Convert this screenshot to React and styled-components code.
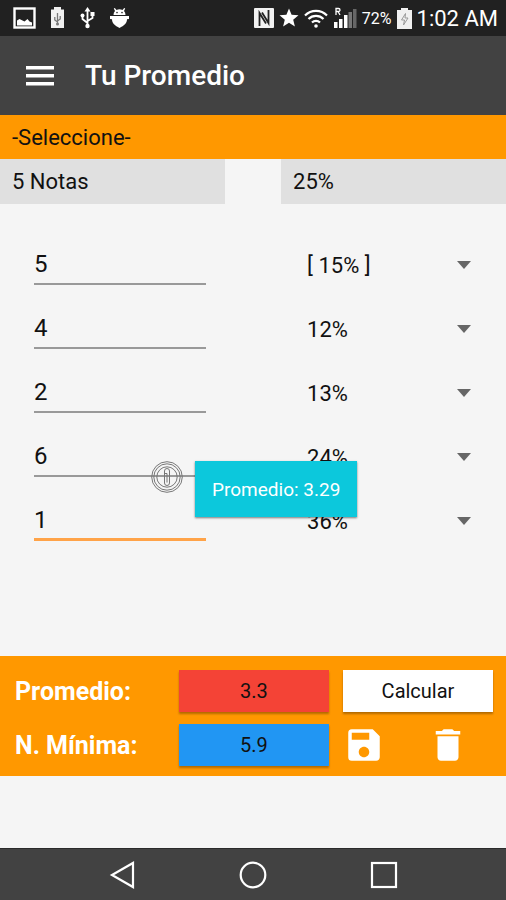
import React, { useState } from "react";
import styled, { createGlobalStyle } from "styled-components";

const initialNotes = [
	{ note: "5", percent: "[ 15% ]" },
	{ note: "4", percent: "12%" },
	{ note: "2", percent: "13%" },
	{ note: "6", percent: "24%" },
	{ note: "1", percent: "36%" },
];

const StatusBar = () => (
	<Status>
		<StatusGroup $gap={14}>
			<svg width="23" height="22" viewBox="0 0 23 22" fill="none">
				<rect x="1.5" y="1.5" width="20" height="19" stroke="#fff" strokeWidth="2.4" />
				<path d="M4 18.500v-5l2.500-1.500 3 1.500 2 1 3-2.500 2 2.500 2.500 1v3z" fill="#fff" />
			</svg>
			<svg width="15" height="22" viewBox="0 0 15 22">
				<path d="M4 0h7v2.500h3V21H1V2.500h3z" fill="#f0f0f0" />
				<path d="M7.500 6v12M4.800 10v3l2.700 2M10.200 9v3l-2.700 2" stroke="#777" strokeWidth="1.300" fill="none" />
				<circle cx="7.500" cy="17" r="1.500" fill="#777" />
			</svg>
			<Glyph width="17" height="22" viewBox="0 0 17 22" fill="none" stroke="#fff" strokeWidth="1.800">
				<path d="M8.500 3v16M3.500 9v3l5 4M13.500 7v4l-5 3" />
				<path d="M8.500 0l3 4.500h-6z" fill="#fff" stroke="none" />
				<circle cx="8.500" cy="19" r="2.200" fill="#fff" stroke="none" />
				<circle cx="3.500" cy="8.500" r="2" fill="#fff" stroke="none" />
				<rect x="11.500" y="5" width="4" height="4" fill="#fff" stroke="none" />
			</Glyph>
			<Glyph width="19" height="22" viewBox="0 0 19 22" fill="#fff">
				<path d="M3.500 8a6 6 0 0 1 1.500-4L3.800 1.400l1-.5 1.700 2a7 7 0 0 1 6 0l1.700-2 1 .5L14 4a6 6 0 0 1 1.500 4z" />
				<path d="M0 9h19v3l-2 .3c0 4-3 6.500-7.500 8.700C5 18.800 2 16.300 2 12.300L0 12z" />
				<circle cx="7" cy="5.600" r=".8" fill="#222" />
				<circle cx="12" cy="5.600" r=".8" fill="#222" />
			</Glyph>
		</StatusGroup>
		<StatusGroup $gap={5}>
			<svg width="20" height="20" viewBox="0 0 20 20">
				<rect width="20" height="20" rx="1" fill="#f2f2f2" />
				<path d="M5.500 18V5l6.500 10.500M14.500 2v13L8 4.500" fill="none" stroke="#222" strokeWidth="1.800" />
			</svg>
			<Glyph width="20" height="20" viewBox="0 0 20 20" fill="#fff">
				<path d="M10 0.500l2.600 6.300 6.900.5-5.300 4.400 1.700 6.800L10 14.800l-5.900 3.700 1.700-6.800L.5 7.300l6.900-.5z" />
			</Glyph>
			<svg width="24" height="20" viewBox="0 0 24 20" fill="none" stroke="#fff" strokeWidth="2.200">
				<path d="M1 7.500a15.500 15.500 0 0 1 22 0M4.500 11a10.500 10.500 0 0 1 15 0M8 14.500a5.600 5.600 0 0 1 8 0" />
				<circle cx="12" cy="18" r="1.800" fill="#fff" stroke="none" />
			</svg>
			<Glyph width="24" height="22" viewBox="0 0 24 22" fill="#fff">
				<rect x="1" y="15" width="3.500" height="6" />
				<rect x="6" y="12" width="3.500" height="9" />
				<rect x="11" y="8" width="3.500" height="13" />
				<rect x="15.500" y="5" width="3.500" height="16" fill="#777" />
				<rect x="20" y="2" width="3.500" height="19" fill="#666" />
				<path d="M3 8V1.500h2.500a1.500 1.500 0 0 1 0 3H3M5 4.500L7 8" fill="none" stroke="#fff" strokeWidth="1.300" />
			</Glyph>
			<Battery>72%</Battery>
			<svg width="15" height="21" viewBox="0 0 15 21">
				<path d="M4 0h7v2h4v19H0V2h4z" fill="#f0f0f0" />
				<path d="M8.500 5.500L4.500 12h3l-1 5 4.500-7H8z" fill="none" stroke="#999" />
			</svg>
			<Clock>1:02 AM</Clock>
		</StatusGroup>
	</Status>
);

const PercentSelect = ({ value, label }) => (
	<Percent>
		<PercentField defaultValue={value} aria-label={label}>
			<option>{value}</option>
		</PercentField>
		<svg width="14" height="8" viewBox="0 0 14 8" fill="#666">
			<path d="M0 0h14L7 8z" />
		</svg>
	</Percent>
);

const App = () => {
	const [notes, setNotes] = useState(initialNotes);

	const changeNote = (index, note) => {
		setNotes(notes.map((item, i) => (i === index ? { ...item, note } : item)));
	};

	return (
		<Screen>
			<GlobalStyle />
			<StatusBar />
			<Header>
				<IconButton aria-label="Menu">
					<svg width="28" height="20" viewBox="0 0 28 20" fill="#fff">
						<path d="M0 0h28v3.500H0zM0 8h28v3.500H0zM0 16h28v3.500H0z" />
					</svg>
				</IconButton>
				<Title>Tu Promedio</Title>
			</Header>
			<BarSelect $main aria-label="Asignatura">
				<option>-Seleccione-</option>
			</BarSelect>
			<Columns>
				<BarSelect aria-label="Notas">
					<option>5 Notas</option>
				</BarSelect>
				<span />
				<BarSelect aria-label="Porcentaje">
					<option>25%</option>
				</BarSelect>
			</Columns>

			<Notes>
				{notes.map((item, index) => (
					<Columns key={index}>
						<NoteInput
							value={item.note}
							$active={index === notes.length - 1}
							aria-label={`Nota ${index + 1}`}
							onChange={(e) => changeNote(index, e.target.value)}
						/>
						<span />
						<PercentSelect value={item.percent} label={`Porcentaje ${index + 1}`} />
					</Columns>
				))}
				<Toast role="status">
					<svg width="32" height="32" viewBox="0 0 32 32" fill="none" stroke="#777">
						<circle cx="16" cy="16" r="15.300" />
						<circle cx="16" cy="16" r="13.200" />
						<circle cx="16" cy="16" r="10.200" />
						<rect x="13.500" y="7.500" width="5" height="17" rx="2.500" />
						<path d="M13.500 12.500h2.500v9" />
					</svg>
					<Message>Promedio: 3.29</Message>
				</Toast>
			</Notes>

			<Summary>
				<Label>Promedio:</Label>
				<RaisedButton $color="#f44336">3.3</RaisedButton>
				<RaisedButton $color="#fff">Calcular</RaisedButton>
				<Label>N. Mínima:</Label>
				<RaisedButton $color="#2196f3">5.9</RaisedButton>
				<Actions>
					<IconButton aria-label="Guardar">
						<svg width="42" height="42" viewBox="0 0 24 24" fill="#fff">
							<path d="M17 3H5a2 2 0 0 0-2 2v14a2 2 0 0 0 2 2h14c1.100 0 2-.9 2-2V7l-4-4zm-5 16c-1.660 0-3-1.340-3-3s1.340-3 3-3 3 1.340 3 3-1.340 3-3 3zm3-10H5V5h10v4z" />
						</svg>
					</IconButton>
					<IconButton aria-label="Eliminar">
						<svg width="42" height="42" viewBox="0 0 24 24" fill="#fff">
							<path d="M6 19c0 1.100.9 2 2 2h8c1.100 0 2-.9 2-2V7H6v12zM19 4h-3.500l-1-1h-5l-1 1H5v2h14V4z" />
						</svg>
					</IconButton>
				</Actions>
			</Summary>

			<NavBar>
				<IconButton aria-label="Atrás">
					<svg width="28" height="28" viewBox="0 0 28 28" fill="none" stroke="#fff" strokeWidth="2.200">
						<path d="M25 2v24L4 14z" />
					</svg>
				</IconButton>
				<IconButton aria-label="Inicio">
					<svg width="28" height="28" viewBox="0 0 28 28" fill="none" stroke="#fff" strokeWidth="2.200">
						<circle cx="14" cy="14" r="12.300" />
					</svg>
				</IconButton>
				<IconButton aria-label="Recientes">
					<svg width="28" height="28" viewBox="0 0 28 28" fill="none" stroke="#fff" strokeWidth="2.200">
						<rect x="2" y="2" width="24" height="24" />
					</svg>
				</IconButton>
			</NavBar>
		</Screen>
	);
};

export default App;

const GlobalStyle = createGlobalStyle`
	* {
		box-sizing: border-box;
	}
	body {
		margin: 0;
		background: #f5f5f5;
		color: #111;
		font-family: Roboto, sans-serif;
	}
	button, input, select {
		margin: 0;
		border: 0;
		border-radius: 0;
		outline: 0;
		color: inherit;
		font-family: inherit;
	}
	svg {
		display: block;
		flex-shrink: 0;
	}
`;

const Screen = styled.div`
	min-height: 100vh;
	display: flex;
	flex-direction: column;
`;

const Status = styled.div`
	height: 36px;
	padding: 0 8px 0 13px;
	display: flex;
	align-items: center;
	justify-content: space-between;
	background: #212121;
	color: #fff;
`;

const StatusGroup = styled.div`
	display: flex;
	align-items: center;
	gap: ${({ $gap }) => $gap}px;
`;

const Glyph = styled.svg`
	overflow: visible;
`;

const Battery = styled.span`
	font-size: 16px;
`;

const Clock = styled.span`
	font-size: 22px;
`;

const Header = styled.header`
	height: 79px;
	padding: 0 26px;
	display: flex;
	align-items: center;
	gap: 31px;
	background: #424242;
	color: #fff;
`;

const Title = styled.h1`
	margin: 0;
	font-size: 28px;
	font-weight: 500;
`;

const IconButton = styled.button`
	padding: 0;
	background: none;
	cursor: pointer;
`;

const BarSelect = styled.select`
	appearance: none;
	width: 100%;
	height: ${({ $main }) => ($main ? 44 : 45)}px;
	padding: 0 12px;
	background: ${({ $main }) => ($main ? "#ff9800" : "#e0e0e0")};
	font-size: 22px;
`;

const Columns = styled.div`
	display: grid;
	grid-template-columns: 4fr 1fr 4fr;
`;

const Notes = styled.main`
	position: relative;
	flex: 1;
	padding-top: 17px;
`;

const NoteInput = styled.input`
	min-width: 0;
	height: 40px;
	margin: 24px 19px 0 34px;
	padding: 0;
	background: none;
	border-bottom: ${({ $active }) => ($active ? "3px solid #ffa348" : "2px solid #999")};
	font-size: 24px;
`;

const Percent = styled.div`
	height: 40px;
	margin-top: 24px;
	padding: 0 35px 0 26px;
	display: flex;
	align-items: center;
`;

const PercentField = styled.select`
	appearance: none;
	flex: 1;
	min-width: 0;
	padding: 0;
	background: none;
	font-size: 22px;
`;

const Toast = styled.div`
	position: absolute;
	top: 257px;
	left: 151px;
	display: flex;
	gap: 12px;
`;

const Message = styled.div`
	height: 56px;
	padding: 0 17px;
	display: flex;
	align-items: center;
	background: #0cc8dc;
	box-shadow: 0 1px 2px rgba(0, 0, 0, 0.5);
	color: #fff;
	font-size: 19px;
	white-space: nowrap;
`;

const Summary = styled.section`
	margin-bottom: 72px;
	padding: 14px 13px 10px 15px;
	display: grid;
	grid-template-columns: 150px 1fr 1fr;
	column-gap: 14px;
	row-gap: 12px;
	background: #ff9800;
`;

const Label = styled.span`
	align-self: center;
	color: #fff;
	font-size: 25px;
	font-weight: 700;
`;

const RaisedButton = styled.button`
	height: 42px;
	background: ${({ $color }) => $color};
	box-shadow: 0 2px 2px rgba(0, 0, 0, 0.3);
	font-size: 20px;
`;

const Actions = styled.div`
	height: 42px;
	display: flex;
	align-items: center;
	gap: 42px;
`;

const NavBar = styled.nav`
	height: 52px;
	padding: 0 108px;
	display: flex;
	align-items: center;
	justify-content: space-between;
	background: #424242;
	border-top: 1px solid #2b2b2b;
`;
